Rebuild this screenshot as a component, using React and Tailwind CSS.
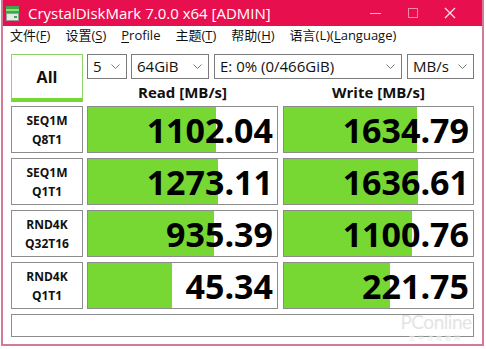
import React from "react";

const FONT = { fontFamily: '"Open Sans", "Noto Sans CJK SC", sans-serif' };

const rows = [
  { l1: "SEQ1M", l2: "Q8T1", read: "1102.04", rw: 128, write: "1634.79", ww: 133 },
  { l1: "SEQ1M", l2: "Q1T1", read: "1273.11", rw: 130, write: "1636.61", ww: 134 },
  { l1: "RND4K", l2: "Q32T16", read: "935.39", rw: 126, write: "1100.76", ww: 128 },
  { l1: "RND4K", l2: "Q1T1", read: "45.34", rw: 84, write: "221.75", ww: 106 },
];

const Chevron = () => (
  <svg width="9" height="5" viewBox="0 0 9 5" className="shrink-0">
    <path d="M0.5 0.5L4.5 4.5L8.5 0.5" fill="none" stroke="#7a7a7a" strokeWidth="1" />
  </svg>
);

const Select = ({ w, text }) => (
  <div
    className={`h-[25px] ${w} border border-[#7a7a7a] bg-white flex items-center justify-between pl-[5px] pr-[6px] text-[15px] text-[#111]`}
  >
    <span className="leading-none">{text}</span>
    <Chevron />
  </div>
);

const Cell = ({ value, width }) => (
  <div className="relative w-[191px] h-[47px] border border-[#8c8c8c] bg-white">
    <div className="absolute inset-y-0 left-0 bg-[#77d733]" style={{ width }} />
    <div className="relative h-full flex items-center justify-end pr-[4px] text-[34px] font-bold text-black leading-none">
      {value}
    </div>
  </div>
);

const Menu = ({ label, u, rest }) => (
  <span className="whitespace-nowrap">
    {label}
    <span className="underline underline-offset-2">{u}</span>
    {rest}
  </span>
);

export default function App() {
  return (
    <div className="w-[486px] h-[349px] bg-white overflow-hidden relative" style={FONT}>
      <div className="ml-[1px] w-[483px] h-[346px] flex flex-col border-x-2 border-b-2 border-[#d47a99] bg-white">
        {/* title bar */}
        <div className="h-[26px] bg-[#e70f4d] flex items-center text-white shrink-0">
          <svg width="13" height="15" viewBox="0 0 13 15" className="ml-[3px]">
            <rect x="0" y="0" width="13" height="7" fill="#3fa64a" />
            <rect x="0" y="3" width="13" height="2" fill="#8fdc7c" />
            <rect x="0" y="7" width="13" height="8" fill="#e8e8e8" />
            <rect x="0.5" y="7.5" width="12" height="7" fill="none" stroke="#9a9a9a" />
            <rect x="8" y="10" width="3" height="2" fill="#3fa64a" />
          </svg>
          <span className="ml-[9px] text-[15px] leading-none">CrystalDiskMark 7.0.0 x64 [ADMIN]</span>
          <div className="ml-auto mr-[14px] flex items-center h-full">
            <div className="w-[37px] h-full flex items-center justify-center">
              <div className="w-[11px] h-[1px] bg-[#f7b6c9]" />
            </div>
            <div className="w-[37px] h-full flex items-center justify-center">
              <div className="w-[10px] h-[10px] border border-[#f08aa8]" />
            </div>
            <div className="w-[37px] h-full flex items-center justify-center">
              <svg width="12" height="12" viewBox="0 0 12 12">
                <path d="M1 1L11 11M11 1L1 11" stroke="#fde2ea" strokeWidth="1.3" />
              </svg>
            </div>
          </div>
        </div>

        {/* menu bar */}
        <div className="h-[20px] flex items-center gap-[15px] pl-[7px] text-[13px] text-[#111] shrink-0">
          <Menu label="文件(" u="F" rest=")" />
          <Menu label="设置(" u="S" rest=")" />
          <Menu label="" u="P" rest="rofile" />
          <Menu label="主题(" u="T" rest=")" />
          <Menu label="帮助(" u="H" rest=")" />
          <Menu label="语言(L)(" u="L" rest="anguage)" />
        </div>

        {/* content */}
        <div className="flex-1 flex flex-col pl-[8px] pt-[8px]">
          <div className="flex">
            <div className="w-[72px] h-[48px] border border-[#8fd46a] border-b-[4px] border-b-[#77d733] bg-white flex items-center justify-center text-[16px] font-bold text-[#111]">
              All
            </div>
            <div className="ml-[4px] flex flex-col">
              <div className="flex gap-[4px]">
                <Select w="w-[40px]" text="5" />
                <Select w="w-[78px]" text="64GiB" />
                <div className="flex gap-[5px] ml-[1px]">
                  <Select w="w-[188px]" text="E: 0% (0/466GiB)" />
                  <Select w="w-[67px]" text="MB/s" />
                </div>
              </div>
              <div className="flex gap-[5px] h-[27px] items-center text-[15px] font-bold text-[#111]">
                <div className="w-[191px] text-center">Read [MB/s]</div>
                <div className="w-[191px] text-center">Write [MB/s]</div>
              </div>
            </div>
          </div>

          <div className="flex flex-col gap-[5px]">
            {rows.map((r) => (
              <div key={r.l1 + r.l2} className="flex">
                <div className="w-[72px] h-[47px] border border-[#8c8c8c] bg-white flex flex-col items-center justify-center text-[12px] font-bold leading-[19px] text-[#111]">
                  <span>{r.l1}</span>
                  <span>{r.l2}</span>
                </div>
                <div className="ml-[4px]">
                  <Cell value={r.read} width={r.rw} />
                </div>
                <div className="ml-[5px]">
                  <Cell value={r.write} width={r.ww} />
                </div>
              </div>
            ))}
          </div>

          <div className="mt-[5px] w-[463px] h-[23px] border border-[#8c8c8c] bg-white" />
        </div>
      </div>

      {/* watermark */}
      <div className="absolute left-[400px] top-[312px] w-[72px] flex flex-col items-center pointer-events-none">
        <span className="text-[19px] leading-none tracking-tight text-[#e4e4e4]" style={{ fontFamily: '"Lato", sans-serif' }}>
          PConline
        </span>
        <span className="text-[6px] leading-none mt-[4px] tracking-[3px] text-[#e8e8e8]" style={{ fontFamily: '"Noto Sans CJK SC", sans-serif' }}>
          太平洋电脑网
        </span>
      </div>
    </div>
  );
}
